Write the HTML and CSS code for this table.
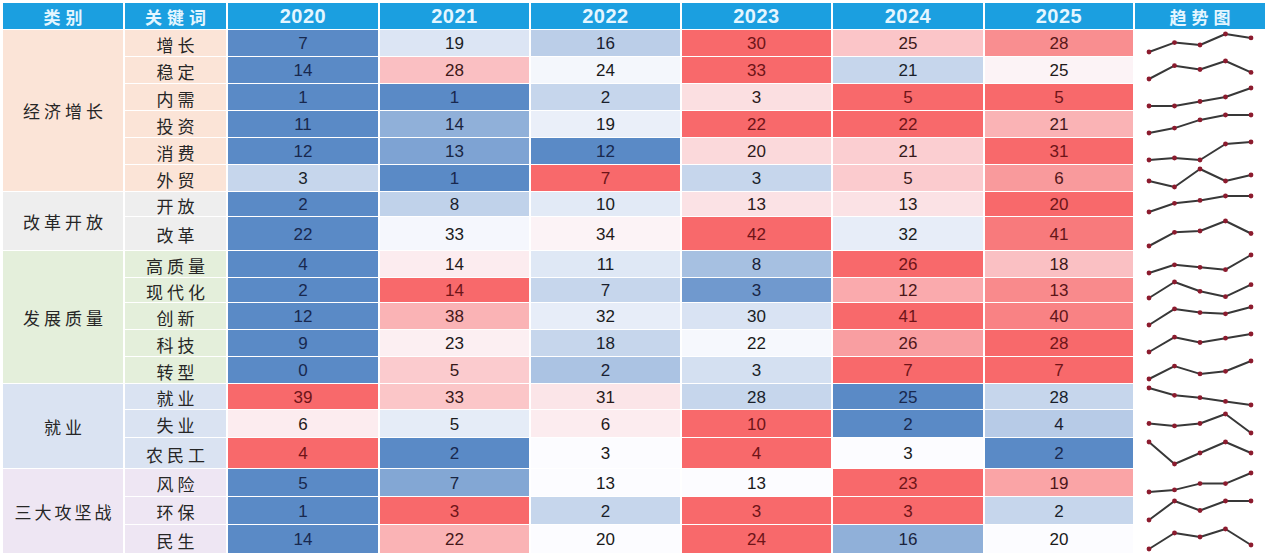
FILE: index.html
```html
<!DOCTYPE html>
<html lang="zh">
<head>
<meta charset="utf-8">
<title>关键词趋势</title>
<link rel="stylesheet" href="styles.css">
</head>
<body>
<div class="sheet">
  <div class="h zh">类别</div>
  <div class="h zh">关键词</div>
  <div class="h yr">2020</div>
  <div class="h yr">2021</div>
  <div class="h yr">2022</div>
  <div class="h yr">2023</div>
  <div class="h yr">2024</div>
  <div class="h yr">2025</div>
  <div class="h zh">趋势图</div>

  <div class="cat c1 g1">经济增长</div>
  <div class="cat c2 g2">改革开放</div>
  <div class="cat c3 g3">发展质量</div>
  <div class="cat c4 g4">就业</div>
  <div class="cat c5 g5">三大攻坚战</div>

  <div class="r g1"><div class="kw">增长</div><div class="v">7</div><div class="v">19</div><div class="v">16</div><div class="v">30</div><div class="v">25</div><div class="v">28</div><div class="t"></div></div>
  <div class="r g1"><div class="kw">稳定</div><div class="v">14</div><div class="v">28</div><div class="v">24</div><div class="v">33</div><div class="v">21</div><div class="v">25</div><div class="t"></div></div>
  <div class="r g1"><div class="kw">内需</div><div class="v">1</div><div class="v">1</div><div class="v">2</div><div class="v">3</div><div class="v">5</div><div class="v">5</div><div class="t"></div></div>
  <div class="r g1"><div class="kw">投资</div><div class="v">11</div><div class="v">14</div><div class="v">19</div><div class="v">22</div><div class="v">22</div><div class="v">21</div><div class="t"></div></div>
  <div class="r g1"><div class="kw">消费</div><div class="v">12</div><div class="v">13</div><div class="v">12</div><div class="v">20</div><div class="v">21</div><div class="v">31</div><div class="t"></div></div>
  <div class="r g1"><div class="kw">外贸</div><div class="v">3</div><div class="v">1</div><div class="v">7</div><div class="v">3</div><div class="v">5</div><div class="v">6</div><div class="t"></div></div>

  <div class="r g2"><div class="kw">开放</div><div class="v">2</div><div class="v">8</div><div class="v">10</div><div class="v">13</div><div class="v">13</div><div class="v">20</div><div class="t"></div></div>
  <div class="r g2"><div class="kw">改革</div><div class="v">22</div><div class="v">33</div><div class="v">34</div><div class="v">42</div><div class="v">32</div><div class="v">41</div><div class="t"></div></div>

  <div class="r g3"><div class="kw">高质量</div><div class="v">4</div><div class="v">14</div><div class="v">11</div><div class="v">8</div><div class="v">26</div><div class="v">18</div><div class="t"></div></div>
  <div class="r g3"><div class="kw">现代化</div><div class="v">2</div><div class="v">14</div><div class="v">7</div><div class="v">3</div><div class="v">12</div><div class="v">13</div><div class="t"></div></div>
  <div class="r g3"><div class="kw">创新</div><div class="v">12</div><div class="v">38</div><div class="v">32</div><div class="v">30</div><div class="v">41</div><div class="v">40</div><div class="t"></div></div>
  <div class="r g3"><div class="kw">科技</div><div class="v">9</div><div class="v">23</div><div class="v">18</div><div class="v">22</div><div class="v">26</div><div class="v">28</div><div class="t"></div></div>
  <div class="r g3"><div class="kw">转型</div><div class="v">0</div><div class="v">5</div><div class="v">2</div><div class="v">3</div><div class="v">7</div><div class="v">7</div><div class="t"></div></div>

  <div class="r g4"><div class="kw">就业</div><div class="v">39</div><div class="v">33</div><div class="v">31</div><div class="v">28</div><div class="v">25</div><div class="v">28</div><div class="t"></div></div>
  <div class="r g4"><div class="kw">失业</div><div class="v">6</div><div class="v">5</div><div class="v">6</div><div class="v">10</div><div class="v">2</div><div class="v">4</div><div class="t"></div></div>
  <div class="r g4"><div class="kw">农民工</div><div class="v">4</div><div class="v">2</div><div class="v">3</div><div class="v">4</div><div class="v">3</div><div class="v">2</div><div class="t"></div></div>

  <div class="r g5"><div class="kw">风险</div><div class="v">5</div><div class="v">7</div><div class="v">13</div><div class="v">13</div><div class="v">23</div><div class="v">19</div><div class="t"></div></div>
  <div class="r g5"><div class="kw">环保</div><div class="v">1</div><div class="v">3</div><div class="v">2</div><div class="v">3</div><div class="v">3</div><div class="v">2</div><div class="t"></div></div>
  <div class="r g5"><div class="kw">民生</div><div class="v">14</div><div class="v">22</div><div class="v">20</div><div class="v">24</div><div class="v">16</div><div class="v">20</div><div class="t"></div></div>
</div>
<script src="script.js"></script>
</body>
</html>
```

FILE: styles.css
```css
html, body {
  margin: 0;
  padding: 0;
  background: #ffffff;
}

.sheet {
  display: grid;
  grid-template-columns: 120px 101px 150px 149px 149px 149px 150px 148px 130px;
  grid-template-rows: 26px 26px 26px 26px 26px 26px 26px 24px 33px 26px 24px 26px 26px 26px 25px 27px 30px 27px 27px 28px;
  gap: 1px 2px;
  margin: 3px 0 0 3px;
  width: 1262px;
}

.r {
  display: contents;
}

.h {
  background: #1b9fe0;
  color: #e4f6ff;
  display: flex;
  align-items: center;
  justify-content: center;
  font-weight: 700;
}

.h.yr {
  font-family: "Liberation Sans", Arial, sans-serif;
  font-size: 20px;
  letter-spacing: 0.5px;
}

.h.zh {
  font-family: "Noto Sans CJK SC", sans-serif;
  font-size: 17px;
  letter-spacing: 5px;
  text-indent: 5px;
}

.cat,
.kw {
  display: flex;
  align-items: center;
  justify-content: center;
  font-family: "Noto Sans CJK SC", sans-serif;
  font-size: 17px;
  color: #262626;
  letter-spacing: 4px;
  text-indent: 4px;
}

.kw {
  padding-top: 2px;
}

.cat {
  grid-column: 1;
}

.c1 { grid-row: 2 / span 6; }
.c2 { grid-row: 8 / span 2; }
.c3 { grid-row: 10 / span 5; }
.c4 { grid-row: 15 / span 3; }
.c5 { grid-row: 18 / span 3; letter-spacing: 3px; text-indent: 3px; }

.g1.cat, .g1 .kw { background: #fbe4d7; }
.g2.cat, .g2 .kw { background: #eeeeee; }
.g3.cat, .g3 .kw { background: #e4efdb; }
.g4.cat, .g4 .kw { background: #dae3f2; }
.g5.cat, .g5 .kw { background: #eee6f3; }

.v {
  display: flex;
  align-items: center;
  justify-content: center;
  padding-top: 2px;
  font-family: "Liberation Sans", Arial, sans-serif;
  font-size: 17px;
  color: #1a1a1a;
  background: #fcfcff;
}

.t {
  background: #ffffff;
  position: relative;
}

.t svg {
  display: block;
}

.spark-line {
  fill: none;
  stroke: #383838;
  stroke-width: 2;
  stroke-linejoin: round;
}

.spark-dot {
  fill: #8c1b2e;
}
```

FILE: script.js
```js
(function () {
  var MIN = [90, 138, 198];
  var MID = [252, 252, 255];
  var MAX = [248, 105, 107];
  var DARK = [26, 26, 26];
  var NAVY = [24, 40, 78];
  var WINE = [110, 20, 24];

  function mix(a, b, t) {
    return [0, 1, 2].map(function (i) {
      return Math.round(a[i] + (b[i] - a[i]) * t);
    });
  }
  function rgb(c) {
    return 'rgb(' + c[0] + ',' + c[1] + ',' + c[2] + ')';
  }

  var NS = 'http://www.w3.org/2000/svg';

  document.querySelectorAll('.r').forEach(function (row) {
    var cells = Array.prototype.slice.call(row.querySelectorAll('.v'));
    var vals = cells.map(function (c) { return parseFloat(c.textContent); });
    var s = vals.slice().sort(function (a, b) { return a - b; });
    var n = s.length;
    var med = n % 2 ? s[(n - 1) / 2] : (s[n / 2 - 1] + s[n / 2]) / 2;
    var mn = s[0], mx = s[n - 1];

    cells.forEach(function (c, i) {
      var v = vals[i];
      var bg, fg, t;
      if (v <= med) {
        t = med === mn ? 0 : (med - v) / (med - mn);
        bg = mix(MID, MIN, t);
        fg = mix(DARK, NAVY, t);
      } else {
        t = mx === med ? 0 : (v - med) / (mx - med);
        bg = mix(MID, MAX, t);
        fg = mix(DARK, WINE, t);
      }
      c.style.background = rgb(bg);
      c.style.color = rgb(fg);
    });

    var tc = row.querySelector('.t');
    var w = tc.clientWidth, h = tc.clientHeight;
    var pts = vals.slice(0, 5);
    var lo = Math.min.apply(null, pts), hi = Math.max.apply(null, pts);
    var x0 = 14, x1 = w - 14, y0 = 4, y1 = h - 4;
    var coords = pts.map(function (v, i) {
      var x = x0 + (x1 - x0) * i / (pts.length - 1);
      var y = hi === lo ? (y0 + y1) / 2 : y1 - (y1 - y0) * (v - lo) / (hi - lo);
      return [x, y];
    });
    var svg = document.createElementNS(NS, 'svg');
    svg.setAttribute('width', w);
    svg.setAttribute('height', h);
    svg.setAttribute('viewBox', '0 0 ' + w + ' ' + h);
    var pl = document.createElementNS(NS, 'polyline');
    pl.setAttribute('class', 'spark-line');
    pl.setAttribute('points', coords.map(function (p) { return p[0].toFixed(1) + ',' + p[1].toFixed(1); }).join(' '));
    svg.appendChild(pl);
    coords.forEach(function (p) {
      var d = document.createElementNS(NS, 'circle');
      d.setAttribute('class', 'spark-dot');
      d.setAttribute('cx', p[0].toFixed(1));
      d.setAttribute('cy', p[1].toFixed(1));
      d.setAttribute('r', '2.4');
      svg.appendChild(d);
    });
    tc.appendChild(svg);
  });
})();
```
